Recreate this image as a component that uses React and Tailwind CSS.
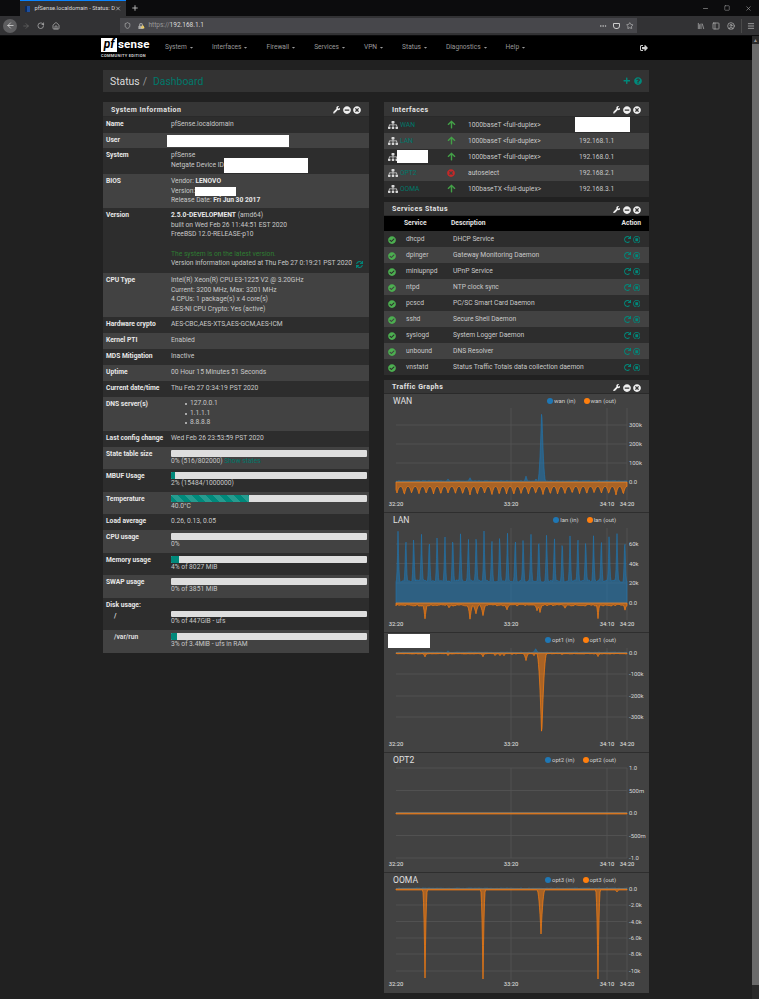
import React from 'react';
import { FaWrench, FaMinusCircle, FaTimesCircle, FaSitemap, FaArrowUp, FaCheckCircle, FaRedo, FaRegStopCircle, FaSync, FaPlus, FaQuestionCircle, FaSignOutAlt, FaCaretDown, FaLock, FaExclamationTriangle } from 'react-icons/fa';
import { ArrowLeft, ArrowRight, RotateCw, House, Shield, Ellipsis, Star, PanelLeft, CircleUser, Menu, Minus, Square, X, Plus, Library } from 'lucide-react';

// --- CHART DATA ---
const rnd = (i) => {
    const s = Math.sin(i * 12.9898) * 43758.5453;
    return s - Math.floor(s);
};

// noise that holds for a couple of pixels, so the edges stay smooth
const noise = (i) => rnd(Math.floor(i / 4));

const xs = [];
for (let x = 396; x <= 627; x += 0.5) xs.push(x);

const bump = (x, at, width, height) => {
    const t = Math.max(0, 1 - Math.abs(x - at) / width);
    return height * t * t;
};

const bumps = (x, list) => list.reduce((sum, b) => sum + bump(x, b[0], b[1], b[2]), 0);

const area = (fn, zero, dir) => {
    const line = xs.map((x, i) => `L${x} ${(zero + dir * fn(x, i)).toFixed(2)}`).join(' ');
    return `M396 ${zero} ${line} L627 ${zero} Z`;
};

const tooth = (x, period, start, width) => {
    const n = Math.round((x - start) / period);
    return { n, t: Math.max(0, 1 - Math.abs(x - (start + n * period)) / width) };
};

const wanIn = (x, i) => 0.8 + noise(i) * 0.5 + bumps(x, [[541.7, 4, 74], [526, 2.5, 5], [470, 2.5, 3], [448, 2, 2], [536, 1.5, 2]]);
const wanOut = (x) => {
    const { n, t } = tooth(x, 7.3, 397, 3.4);
    return 4.5 + (6.5 + rnd(n) * 2) * t * t;
};

const lanIn = (x, i) => {
    const { n, t } = tooth(x, 7.82, 398, 1.9);
    return 21 + noise(i) * 2 + (45 + rnd(n + 3) * 7) * t * t;
};
const lanDips = [[425, 2.5, 12], [470, 3, 14], [476, 3.5, 8], [483, 3.5, 10], [449, 3, 3], [507, 3, 5], [537, 2.5, 6], [540, 3, 8], [598, 2, 14], [425, 8, 1], [565, 3, 3], [625, 2, 5]];
const lanOut = (x, i) => 1.5 + noise(i + 7) * 1.4 + bumps(x, lanDips);

const opt1In = (x, i) => 0.5 + noise(i) * 0.4 + bumps(x, [[535.7, 3, 4], [448, 2, 1.5]]);
const opt1Out = (x, i) => 0.5 + noise(i + 9) * 0.4 + bumps(x, [[541.7, 5, 84], [425, 2.5, 3], [448, 2, 2], [483, 2.5, 3], [495, 2, 2], [500, 2, 2], [504, 2, 2], [526, 3, 7], [534, 2, 2], [512, 2, 1], [598, 2.5, 3], [562, 2, 1]]);

const flatIn = () => 0.3;
const flatOut = () => 1;

const oomaIn = (x, i) => 0.5 + noise(i) * 0.5;
const oomaOut = (x) => 1 + bump(x, 425, 2.4, 88) + bump(x, 483, 2.4, 89) + bump(x, 541, 4, 44) + bump(x, 598, 2.4, 89) + bump(x, 617, 2, 2);

const GRID = '#585858';

// --- CHART ---
const Chart = ({ title, top, height, name, zero, plotTop, plotBottom, ticks, xLabel, inFn, outFn, border }) => (
    <div className={`bg-[#424242] ${border ? 'border-b border-[#2e2e2e]' : ''}`}>
        <div className="h-[14px] flex items-center justify-between pl-[9px] pr-[33px]">
            {title ? (
                <span className="text-[8.6px] text-[#e0e0e0] leading-none pt-px">{title}</span>
            ) : (
                <span className="w-[42px] h-[14px] -ml-[5px] mt-px bg-white"></span>
            )}
            <div className="flex items-center gap-[8px] text-[6px] text-[#d0d0d0]">
                <span className="flex items-center gap-px"><i className="w-[6px] h-[6px] rounded-full bg-[#1f77b4]"></i>{name} (in)</span>
                <span className="flex items-center gap-px"><i className="w-[6px] h-[6px] rounded-full bg-[#ff7f0e]"></i>{name} (out)</span>
            </div>
        </div>
        <svg width="265" height={height} viewBox={`384 ${top + 14} 265 ${height}`} className="block overflow-visible">
            {ticks.map((t) => (
                <line key={t[0]} x1="396" x2="627" y1={t[1]} y2={t[1]} stroke={GRID} strokeWidth="0.7" />
            ))}
            {[511, 607, 627].map((x) => (
                <line key={x} x1={x} x2={x} y1={plotTop} y2={plotBottom} stroke={GRID} strokeWidth="0.7" />
            ))}
            <path d={area(inFn, zero, -1)} fill="#1f77b4" fillOpacity="0.56" stroke="#1f77b4" strokeWidth="0.6" />
            <path d={area(outFn, zero, 1)} fill="#ff7f0e" fillOpacity="0.55" stroke="#ff7f0e" strokeWidth="0.7" />
            {ticks.map((t) => (
                <text key={t[0]} x="629" y={t[1] + 2} fontSize="5.9" fill="#d8d8d8">{t[0]}</text>
            ))}
            {[[396, '32:20'], [511, '33:20'], [607, '34:10'], [627, '34:20']].map((l) => (
                <text key={l[1]} x={l[0]} y={xLabel + 2} fontSize="5.9" fill="#e4e4e4" textAnchor="middle">{l[1]}</text>
            ))}
        </svg>
    </div>
);

// --- SMALL PARTS ---
const PanelHead = ({ title, h = 'h-[15px]' }) => (
    <div className={`${h} bg-[#363636] flex items-center justify-between pl-[8px] pr-[8px] border-b border-[#2a2a2a]`}>
        <span className="text-[7px] font-bold tracking-[0.45px] text-[#e4e4e4] pt-[3px]">{title}</span>
        <div className="flex items-center gap-[2.5px] text-[#f0f0f0] pt-[2px]">
            <FaWrench size={7.5} />
            <FaMinusCircle size={8} />
            <FaTimesCircle size={8} />
        </div>
    </div>
);

const Row = ({ label, h, light, children, className = '' }) => (
    <div className={`${h} ${light ? 'bg-[#424242]' : 'bg-[#2d2d2d]'} flex pl-[3px] pt-[3px] pr-[2px]`}>
        <div className="w-[65px] shrink-0 font-bold text-[#e8e8e8] whitespace-nowrap">{label}</div>
        <div className={`flex-1 min-w-0 text-[#c8c8c8] ${className}`}>{children}</div>
    </div>
);

const Bar = ({ width, striped, children }) => (
    <>
        <div className="h-[6.5px] rounded-[1px] bg-[#dedede] overflow-hidden">
            <div className={`${width} h-full bg-[#00897b] ${striped ? 'bg-[linear-gradient(45deg,rgba(255,255,255,.15)_25%,transparent_25%,transparent_50%,rgba(255,255,255,.15)_50%,rgba(255,255,255,.15)_75%,transparent_75%,transparent)] bg-[length:14px_14px]' : ''}`}></div>
        </div>
        <div>{children}</div>
    </>
);

const interfaces = [
    { name: 'WAN', media: '1000baseT <full-duplex>', up: true, ip: null },
    { name: 'LAN', media: '1000baseT <full-duplex>', up: true, ip: '192.168.1.1' },
    { name: null, media: '1000baseT <full-duplex>', up: true, ip: '192.168.0.1' },
    { name: 'OPT2', media: 'autoselect', up: false, ip: '192.168.2.1' },
    { name: 'OOMA', media: '100baseTX <full-duplex>', up: true, ip: '192.168.3.1' }
];

const services = [
    ['dhcpd', 'DHCP Service'],
    ['dpinger', 'Gateway Monitoring Daemon'],
    ['miniupnpd', 'UPnP Service'],
    ['ntpd', 'NTP clock sync'],
    ['pcscd', 'PC/SC Smart Card Daemon'],
    ['sshd', 'Secure Shell Daemon'],
    ['syslogd', 'System Logger Daemon'],
    ['unbound', 'DNS Resolver'],
    ['vnstatd', 'Status Traffic Totals data collection daemon']
];

const menu = ['System', 'Interfaces', 'Firewall', 'Services', 'VPN', 'Status', 'Diagnostics', 'Help'];

export default function App() {
    return (
        <div className="w-[759px] h-[999px] overflow-hidden flex flex-col bg-[#212121] font-['Roboto',sans-serif] text-[6.7px] leading-[9.67px]">

            {/* BROWSER TABS */}
            <div className="h-[16px] bg-[#0c0c0d] flex items-stretch shrink-0">
                <div className="ml-[20px] w-[106px] bg-[#323234] border-t border-[#0a84ff] flex items-center pl-[5px] pr-[5px] text-[#d8d8d8]">
                    <span className="w-[6px] h-[6px] mr-[4px] bg-[#1d4e9e] border-l-2 border-[#0b2a5c]"></span>
                    <span className="flex-1 whitespace-nowrap text-[5.7px]">pfSense.localdomain - Status: D</span>
                    <X size={7} strokeWidth={2.5} />
                </div>
                <div className="ml-[5px] flex items-center text-[#ccc]"><Plus size={8} strokeWidth={2.5} /></div>
                <div className="flex-1"></div>
                <div className="flex items-center text-[#aaa] gap-[15px] pr-[7px]">
                    <Minus size={7} strokeWidth={2} />
                    <Square size={6} strokeWidth={2} />
                    <X size={7} strokeWidth={2} />
                </div>
            </div>

            {/* BROWSER TOOLBAR */}
            <div className="h-[20px] bg-[#323234] flex items-center shrink-0 border-b border-[#0c0c0d]">
                <div className="ml-[3px] w-[14px] h-[14px] rounded-full bg-[#5e5e60] flex items-center justify-center text-[#ddd]"><ArrowLeft size={9} /></div>
                <ArrowRight size={8} className="ml-[5px] text-[#6a6a6a]" />
                <RotateCw size={7.5} className="ml-[7px] text-[#c8c8c8]" />
                <House size={8} className="ml-[7px] text-[#c8c8c8]" />
                <div className="ml-[60px] w-[517px] h-[15px] bg-[#47474b] flex items-center text-[#c8c8c8] pl-[4px] pr-[3px]">
                    <Shield size={7} />
                    <span className="relative ml-[7px] mr-[5px] text-[#aaa]">
                        <FaLock size={6} />
                        <FaExclamationTriangle size={3.5} className="absolute -right-px bottom-0 text-[#ffd54f]" />
                    </span>
                    <span className="text-[6.5px] text-[#999]">https://<span className="text-[#ddd]">192.168.1.1</span></span>
                    <div className="flex-1"></div>
                    <Ellipsis size={8} />
                    <span className="ml-[6px] w-[7px] h-[6px] rounded-b-[3px] border border-[#ccc]"></span>
                    <Star size={7.5} className="ml-[6px]" />
                </div>
                <Library size={8} className="ml-[60px] text-[#bbb]" />
                <PanelLeft size={8} className="ml-[7px] text-[#bbb]" />
                <CircleUser size={8} className="ml-[7px] text-[#bbb]" />
                <span className="ml-[6px] h-[14px] border-l border-[#4a4a4a]"></span>
                <Menu size={8} className="ml-[5px] text-[#ccc]" />
            </div>

            <div className="flex-1 flex min-h-0">
                <div className="flex-1 min-w-0">

                    {/* NAV */}
                    <div className="h-[24px] bg-black flex items-center pl-[101px] text-[#9a9a9a]">
                        <div className="w-[50px] shrink-0 flex flex-col">
                            <div className="flex items-center h-[15px]">
                                <span className="w-[16px] h-[14px] bg-white text-black font-bold italic text-[12px] leading-[13px] text-center">pf</span>
                                <span className="ml-px text-[11.5px] font-bold text-white leading-none tracking-[0.2px]">sense</span>
                            </div>
                            <span className="text-[4px] font-bold leading-[6px] tracking-[0.28px] text-[#d0d0d0] whitespace-nowrap">COMMUNITY EDITION</span>
                        </div>
                        <div className="ml-[14px] flex items-center gap-[18px] text-[6.6px]">
                            {menu.map(m => (
                                <span key={m} className="flex items-center gap-[2px]">{m} <FaCaretDown size={5} /></span>
                            ))}
                        </div>
                        <FaSignOutAlt size={8} className="ml-[114px] text-[#cfcfcf]" />
                    </div>

                    <div className="pl-[103px] pr-[103px] pt-[10px]">

                        {/* BREADCRUMB */}
                        <div className="h-[22px] bg-[#333] flex items-center pl-[7px] pr-[7px] text-[10.4px]">
                            <span className="text-[#dcdcdc] pt-px">Status</span>
                            <span className="ml-[3px] text-[#999] pt-px">/</span>
                            <span className="ml-[6px] text-[#00796b] pt-px">Dashboard</span>
                            <div className="flex-1"></div>
                            <div className="flex items-center gap-[4px] text-[#00897b]">
                                <FaPlus size={7.5} />
                                <FaQuestionCircle size={8} />
                            </div>
                        </div>

                        <div className="mt-[10px] flex justify-between items-start">

                            {/* SYSTEM INFORMATION */}
                            <div className="w-[266px] shrink-0">
                                <PanelHead title="System Information" />
                                <Row label="Name" h="h-[16px]">pfSense.localdomain</Row>
                                <Row label="User" h="h-[15px]" light><span className="block w-[122px] h-[12px] -ml-[4px] -mt-px bg-white"></span></Row>
                                <Row label="System" h="h-[26px]">
                                    <div>pfSense</div>
                                    <div className="flex items-center">Netgate Device ID<span className="w-[84px] h-[15px] -my-[3px] bg-white"></span></div>
                                </Row>
                                <Row label="BIOS" h="h-[34px]" light>
                                    <div>Vendor: <b className="text-[#e8e8e8]">LENOVO</b></div>
                                    <div className="flex items-center">Version:<span className="w-[41px] h-[9px] bg-white"></span></div>
                                    <div>Release Date: <b className="text-[#e8e8e8]">Fri Jun 30 2017</b></div>
                                </Row>
                                <Row label="Version" h="h-[65px]">
                                    <div><b className="text-[#e8e8e8]">2.5.0-DEVELOPMENT</b> (amd64)</div>
                                    <div>built on Wed Feb 26 11:44:51 EST 2020</div>
                                    <div>FreeBSD 12.0-RELEASE-p10</div>
                                    <div className="h-[9.67px]"></div>
                                    <div className="text-[#2e7d32]">The system is on the latest version.</div>
                                    <div className="flex items-center">Version information updated at Thu Feb 27 0:19:21 PST 2020<FaSync size={7} className="ml-[4px] text-[#00897b]" /></div>
                                </Row>
                                <Row label="CPU Type" h="h-[44px]" light>
                                    <div>Intel(R) Xeon(R) CPU E3-1225 V2 @ 3.20GHz</div>
                                    <div>Current: 3200 MHz, Max: 3201 MHz</div>
                                    <div>4 CPUs: 1 package(s) x 4 core(s)</div>
                                    <div>AES-NI CPU Crypto: Yes (active)</div>
                                </Row>
                                <Row label="Hardware crypto" h="h-[16px]">AES-CBC,AES-XTS,AES-GCM,AES-ICM</Row>
                                <Row label="Kernel PTI" h="h-[16px]" light>Enabled</Row>
                                <Row label="MDS Mitigation" h="h-[16px]">Inactive</Row>
                                <Row label="Uptime" h="h-[16px]" light>00 Hour 15 Minutes 51 Seconds</Row>
                                <Row label="Current date/time" h="h-[16px]">Thu Feb 27 0:34:19 PST 2020</Row>
                                <Row label="DNS server(s)" h="h-[34px]" light>
                                    <div className="-mt-px">
                                        {['127.0.0.1', '1.1.1.1', '8.8.8.8'].map(d => (
                                            <div key={d} className="pl-[14px] flex items-center gap-[3px]"><i className="w-[2px] h-[2px] rounded-full bg-[#ccc]"></i>{d}</div>
                                        ))}
                                    </div>
                                </Row>
                                <Row label="Last config change" h="h-[16px]">Wed Feb 26 23:53:59 PST 2020</Row>
                                <Row label="State table size" h="h-[22px]" light>
                                    <Bar width="w-0">0% (516/802000) <span className="text-[#00796b]">Show states</span></Bar>
                                </Row>
                                <Row label="MBUF Usage" h="h-[23px]">
                                    <Bar width="w-[2%]">2% (15484/1000000)</Bar>
                                </Row>
                                <Row label="Temperature" h="h-[22px]" light>
                                    <Bar width="w-[40%]" striped>40.0°C</Bar>
                                </Row>
                                <Row label="Load average" h="h-[16px]">0.26, 0.13, 0.05</Row>
                                <Row label="CPU usage" h="h-[23px]" light>
                                    <Bar width="w-0">0%</Bar>
                                </Row>
                                <Row label="Memory usage" h="h-[22px]">
                                    <Bar width="w-[4%]">4% of 8027 MiB</Bar>
                                </Row>
                                <Row label="SWAP usage" h="h-[23px]" light>
                                    <Bar width="w-0">0% of 3851 MiB</Bar>
                                </Row>
                                <Row label={<>Disk usage:<div className="pl-[8px] pt-[1px] text-[#ddd]">/</div></>} h="h-[32px]">
                                    <div className="pt-[9.5px]">
                                        <Bar width="w-0">0% of 447GiB - ufs</Bar>
                                    </div>
                                </Row>
                                <Row label={<span className="pl-[8px] text-[#ddd]">/var/run</span>} h="h-[23px]" light>
                                    <Bar width="w-[3%]">3% of 3.4MiB - ufs in RAM</Bar>
                                </Row>
                            </div>

                            <div className="w-[265px] shrink-0 flex flex-col gap-[5px]">

                                {/* INTERFACES */}
                                <div>
                                    <PanelHead title="Interfaces" />
                                    {interfaces.map((f, i) => (
                                        <div key={i} className={`h-[16px] pt-[2px] flex items-center text-[#c8c8c8] ${i % 2 ? 'bg-[#424242]' : 'bg-[#2d2d2d]'}`}>
                                            <FaSitemap size={10} className="ml-[4px] -mt-[2px] shrink-0 text-[#d8d8d8]" />
                                            <span className="ml-[2px] w-[47px] shrink-0 text-[#00796b]">
                                                {f.name || <span className="block w-[31px] h-[13px] -ml-[3px] -mt-[3px] bg-white"></span>}
                                            </span>
                                            <span className="w-[21px] shrink-0 -mt-[3px]">
                                                {f.up ? <FaArrowUp size={9} className="text-[#43a047]" /> : <FaTimesCircle size={8} className="text-[#c62828]" />}
                                            </span>
                                            <span className="w-[111px] shrink-0">{f.media}</span>
                                            {f.ip ? f.ip : <span className="w-[55px] h-[15px] -ml-[4px] -mt-[3px] bg-white"></span>}
                                        </div>
                                    ))}
                                </div>

                                {/* SERVICES */}
                                <div>
                                    <PanelHead title="Services Status" h="h-[14px]" />
                                    <div className="h-[15px] bg-black flex items-center font-bold text-[#e4e4e4]">
                                        <span className="ml-[20px] w-[47px]">Service</span>
                                        <span className="flex-1">Description</span>
                                        <span className="mr-[8px]">Action</span>
                                    </div>
                                    {services.map((s, i) => (
                                        <div key={s[0]} className={`h-[16px] pt-[1px] flex items-center text-[#c8c8c8] ${i % 2 ? 'bg-[#424242]' : 'bg-[#2d2d2d]'}`}>
                                            <FaCheckCircle size={8} className="ml-[4px] shrink-0 text-[#4caf50]" />
                                            <span className="ml-[10px] w-[47px] shrink-0">{s[0]}</span>
                                            <span className="flex-1">{s[1]}</span>
                                            <span className="flex items-center gap-[2px] mr-[9px] text-[#00897b]">
                                                <FaRedo size={7} />
                                                <FaRegStopCircle size={7.5} />
                                            </span>
                                        </div>
                                    ))}
                                </div>

                                {/* TRAFFIC GRAPHS */}
                                <div>
                                    <PanelHead title="Traffic Graphs" h="h-[14px]" />
                                    <Chart title="WAN" name="wan" top={394} height={104} zero={482} plotTop={408} plotBottom={500} xLabel={504} border inFn={wanIn} outFn={wanOut}
                                        ticks={[['300k', 425], ['200k', 444], ['100k', 463], ['0.0', 482]]} />
                                    <Chart title="LAN" name="lan" top={513} height={105} zero={603} plotTop={528} plotBottom={620} xLabel={624} border inFn={lanIn} outFn={lanOut}
                                        ticks={[['60k', 544], ['40k', 563.5], ['20k', 583], ['0.0', 603]]} />
                                    <Chart name="opt1" top={633} height={105} zero={653} plotTop={648} plotBottom={740} xLabel={744} border inFn={opt1In} outFn={opt1Out}
                                        ticks={[['0.0', 653], ['-100k', 674], ['-200k', 696], ['-300k', 717]]} />
                                    <Chart title="OPT2" name="opt2" top={753} height={105} zero={813} plotTop={768} plotBottom={858} xLabel={864} border inFn={flatIn} outFn={flatOut}
                                        ticks={[['1.0', 768], ['500m', 790.5], ['0.0', 813], ['-500m', 835.5], ['-1.0', 858]]} />
                                    <Chart title="OOMA" name="opt3" top={873} height={106} zero={889} plotTop={887} plotBottom={980} xLabel={984} inFn={oomaIn} outFn={oomaOut}
                                        ticks={[['0.0', 889], ['-2.0k', 905], ['-4.0k', 921.5], ['-6.0k', 938], ['-8.0k', 954], ['-10k', 971]]} />
                                </div>
                            </div>
                        </div>
                    </div>
                </div>

                {/* SCROLLBAR */}
                <div className="w-[7px] shrink-0 bg-[#2a2a2a] flex flex-col">
                    <div className="h-[8px] flex items-center justify-center text-[#999] text-[5px] leading-none">▲</div>
                    <div className="h-[941px] bg-[#6b6b6b]"></div>
                </div>
            </div>
        </div>
    );
}
